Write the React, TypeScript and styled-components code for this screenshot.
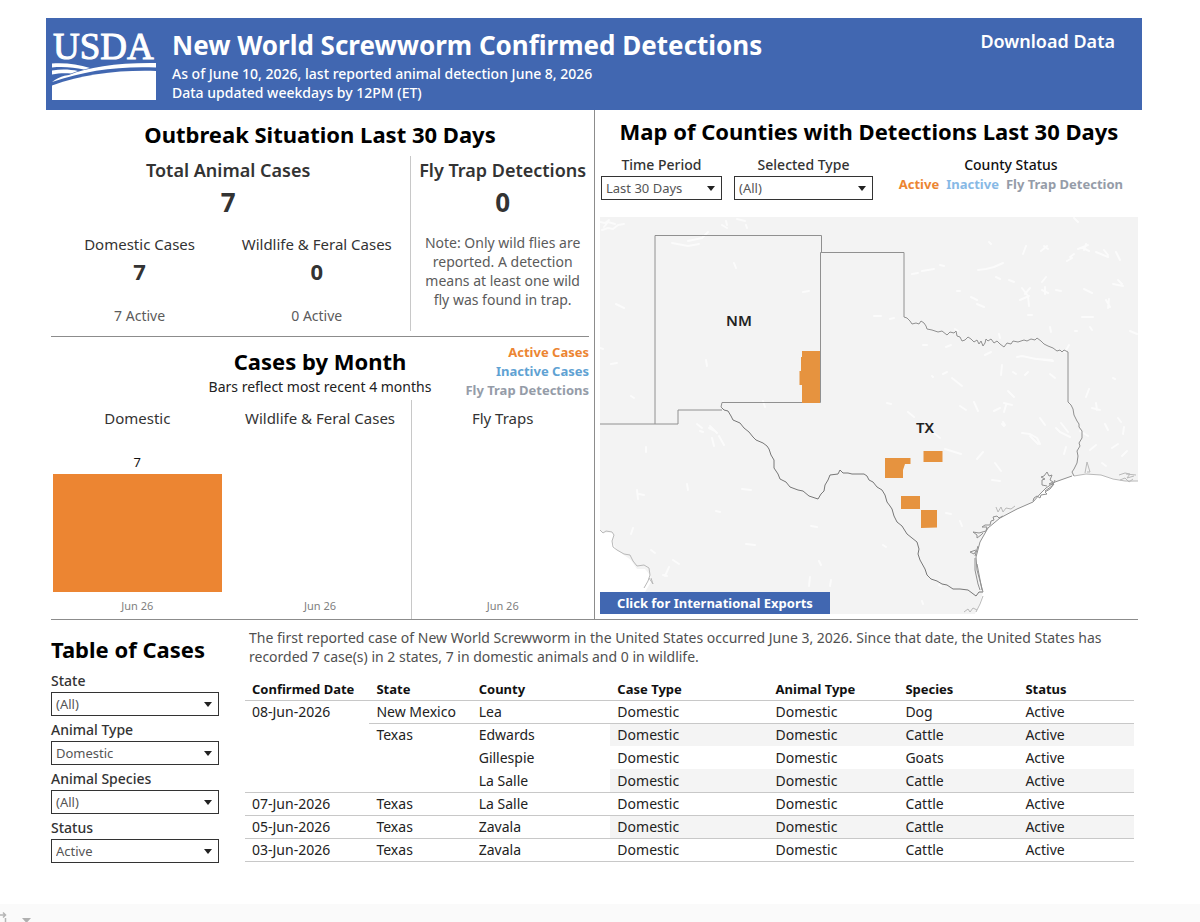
import React from "react";
import styled, { createGlobalStyle } from "styled-components";

const colors = {
  blue: "#4167b1",
  orange: "#ec8532",
  county: "#e6933f",
  inactive: "#5fa2d3",
  inactiveLight: "#87b9e6",
  trap: "#959ca8",
  text: "#333333",
  muted: "#5b5b5b",
  rule: "#8c8c8c",
  lightRule: "#c8c8c8",
  land: "#f3f3f3",
};

const GlobalStyle = createGlobalStyle`
  * { box-sizing: border-box; }
  body {
    margin: 0;
    background: #ffffff;
    color: ${colors.text};
    font-family: "Noto Sans", "Open Sans", sans-serif;
    font-size: 14px;
    line-height: 18px;
  }
  h1, h2, h3, p, dl, dd, dt, ul { margin: 0; padding: 0; }
`;

const Page = styled.div`
  min-height: 100vh;
  display: flex;
  flex-direction: column;
`;

const Dashboard = styled.main`
  flex: 1;
  padding: 18px 58px 38px 46px;
`;

const Banner = styled.header`
  display: flex;
  align-items: flex-start;
  gap: 16px;
  min-height: 92px;
  padding: 9px 27px 0 6px;
  background: ${colors.blue};
  color: #ffffff;
`;

const Logo = styled.svg`
  width: 104px;
  height: 74px;
  flex: none;
  overflow: visible;
`;

const BannerText = styled.div`
  flex: 1;
  font-size: 14px;
  font-weight: 500;
  line-height: 19px;
`;

const BannerTitle = styled.h1`
  font-size: 26px;
  font-weight: 700;
  line-height: 37px;
`;

const DownloadLink = styled.a`
  padding-top: 3px;
  color: #ffffff;
  font-size: 18px;
  font-weight: 600;
  line-height: 22px;
  text-decoration: none;
`;

const Overview = styled.div`
  display: grid;
  grid-template-columns: 1fr 1fr;
`;

const LeftColumn = styled.div`
  display: flex;
  flex-direction: column;
`;

const MapColumn = styled.section`
  border-left: 1px solid ${colors.rule};
  padding: 6px 4px 5px 5px;
`;

const SectionTitle = styled.h2`
  color: #000000;
  font-size: 22px;
  font-weight: 700;
  line-height: 30px;
  text-align: center;
`;

const Rule = styled.hr<{ $right?: number }>`
  height: 1px;
  margin: 0 ${(p) => p.$right ?? 5}px 0 5px;
  border: 0;
  background: ${colors.rule};
`;

const Situation = styled.section`
  padding: 9px 0 5px;
`;

const SituationGrid = styled.div`
  display: grid;
  grid-template-columns: 2fr 1fr;
  margin-top: 7px;
`;

const Totals = styled.div`
  min-height: 175px;
  padding-top: 3px;
  border-right: 1px solid ${colors.lightRule};
  text-align: center;
`;

const FlyTrap = styled.div`
  padding-top: 3px;
  text-align: center;
`;

const MetricTitle = styled.h3`
  font-size: 18px;
  font-weight: 600;
  line-height: 22px;
`;

const MetricValue = styled.p`
  font-size: 26px;
  font-weight: 700;
  line-height: 42px;
`;

const SubMetrics = styled.div`
  display: grid;
  grid-template-columns: 1fr 1fr;
  padding: 12px 5px 0;
`;

const SubMetricTitle = styled.h3`
  font-size: 15px;
  font-weight: 400;
  line-height: 18px;
`;

const SubMetricValue = styled.p`
  font-size: 22px;
  font-weight: 700;
  line-height: 36px;
`;

const SubMetricNote = styled.p`
  padding-top: 18px;
  color: ${colors.muted};
  line-height: 18px;
`;

const TrapNote = styled.p`
  width: 164px;
  margin: 10px auto 0;
  color: ${colors.muted};
  line-height: 19px;
`;

const MonthSection = styled.section`
  flex: 1;
  display: flex;
  flex-direction: column;
`;

const MonthHead = styled.div`
  display: grid;
  grid-template-columns: 1fr auto 1fr;
  padding: 6px 5px 0;
`;

const MonthTitle = styled.div`
  grid-column: 2;
  padding-top: 3px;
  color: #222222;
  text-align: center;
`;

const MonthSubtitle = styled.p`
  margin-top: 2px;
`;

const MonthLegend = styled.ul`
  display: flex;
  flex-direction: column;
  align-items: flex-end;
  list-style: none;
`;

const LegendItem = styled.li<{ $color: string }>`
  color: ${(p) => p.$color};
  font-size: 13px;
  font-weight: 700;
  line-height: 19px;
  white-space: nowrap;
`;

const Charts = styled.div`
  flex: 1;
  display: grid;
  grid-template-columns: repeat(3, 1fr);
`;

const Chart = styled.figure<{ $divided?: boolean }>`
  display: flex;
  flex-direction: column;
  margin: 0;
  padding: 9px 7px 4px 6px;
  border-left: 1px solid ${(p) => (p.$divided ? colors.lightRule : "transparent")};
  text-align: center;
`;

const ChartTitle = styled.figcaption`
  font-size: 15px;
  line-height: 18px;
`;

const Plot = styled.div`
  flex: 1;
  display: flex;
  flex-direction: column;
  justify-content: flex-end;
  color: #111111;
  font-size: 13px;
`;

const Bar = styled.div`
  height: 118px;
  margin-top: 3px;
  background: ${colors.orange};
`;

const AxisLabel = styled.p`
  padding-top: 5px;
  color: #808080;
  font-size: 11px;
  line-height: 18px;
`;

const MapControls = styled.div`
  display: flex;
  gap: 12px;
  padding: 10px 15px 17px 1px;
`;

const Field = styled.div<{ $width?: number; $center?: boolean }>`
  width: ${(p) => (p.$width ? `${p.$width}px` : "auto")};
  text-align: ${(p) => (p.$center ? "center" : "left")};
`;

const FieldLabel = styled.label`
  display: block;
  font-weight: 500;
  line-height: 18px;
`;

const SelectFrame = styled.div`
  position: relative;
  margin-top: 2px;

  &::after {
    content: "";
    position: absolute;
    top: 10px;
    right: 7px;
    border: 4px solid transparent;
    border-top: 5px solid #222222;
    border-bottom: 0;
    pointer-events: none;
  }
`;

const Select = styled.select`
  appearance: none;
  display: block;
  width: 100%;
  height: 24px;
  padding: 0 20px 0 4px;
  border: 1px solid #333333;
  border-radius: 0;
  background: #ffffff;
  color: #555555;
  font-family: inherit;
  font-size: 13px;
  line-height: 20px;
`;

const StatusLegend = styled.div`
  margin-left: auto;
  color: #111111;
  font-weight: 500;
  text-align: center;
`;

const StatusList = styled.ul`
  display: flex;
  justify-content: flex-end;
  gap: 7px;
  padding-top: 1px;
  list-style: none;
`;

const MapFrame = styled.div`
  position: relative;
`;

const MapDrawing = styled.svg`
  display: block;
  width: 100%;
  height: auto;
`;

const ExportButton = styled.button`
  position: absolute;
  left: 0;
  bottom: 0;
  height: 22px;
  width: 230px;
  padding: 0;
  border: 0;
  background: ${colors.blue};
  color: #ffffff;
  font-family: inherit;
  font-size: 13px;
  font-weight: 700;
  line-height: 22px;
`;

const CasesSection = styled.section`
  display: grid;
  grid-template-columns: 168px 1fr;
  gap: 26px;
  padding: 8px 8px 0 5px;
`;

const Filters = styled.form`
  display: flex;
  flex-direction: column;
  gap: 5px;
  padding-top: 6px;
`;

const FiltersTitle = styled(SectionTitle)`
  margin-bottom: 3px;
  text-align: left;
  white-space: nowrap;
`;

const Summary = styled.p`
  padding: 0 0 0 4px;
  color: #505050;
  line-height: 19px;
`;

const CaseTable = styled.table`
  width: 100%;
  margin-top: 14px;
  border-collapse: collapse;
  table-layout: fixed;
  color: #222222;
`;

const HeadCell = styled.th<{ $share: number }>`
  width: ${(p) => p.$share}%;
  height: 20px;
  padding: 0 0 0 7px;
  border-bottom: 1px solid ${colors.lightRule};
  color: #111111;
  font-size: 13px;
  font-weight: 700;
  line-height: 19px;
  text-align: left;
  white-space: nowrap;
`;

const Cell = styled.td<{ $shaded?: boolean; $line?: boolean }>`
  height: 23px;
  padding: 0 0 0 7px;
  border-bottom: 1px solid ${(p) => (p.$line ? colors.lightRule : "transparent")};
  background: ${(p) => (p.$shaded ? "#f4f4f4" : "transparent")};
  background-clip: padding-box;
  line-height: 22px;
  vertical-align: top;
  white-space: nowrap;
`;

const Toolbar = styled.footer`
  display: flex;
  align-items: flex-end;
  height: 18px;
  background: #fafafa;
`;

type CaseRow = {
  date?: string;
  dateSpan?: number;
  state?: string;
  stateSpan?: number;
  county: string;
  species: string;
  line: boolean;
};

const caseRows: CaseRow[] = [
  { date: "08-Jun-2026", dateSpan: 4, state: "New Mexico", county: "Lea", species: "Dog", line: true },
  { state: "Texas", stateSpan: 3, county: "Edwards", species: "Cattle", line: false },
  { county: "Gillespie", species: "Goats", line: false },
  { county: "La Salle", species: "Cattle", line: true },
  { date: "07-Jun-2026", state: "Texas", county: "La Salle", species: "Cattle", line: true },
  { date: "05-Jun-2026", state: "Texas", county: "Zavala", species: "Cattle", line: true },
  { date: "03-Jun-2026", state: "Texas", county: "Zavala", species: "Cattle", line: true },
];

const columns: [string, number][] = [
  ["Confirmed Date", 14],
  ["State", 11.5],
  ["County", 15.6],
  ["Case Type", 17.8],
  ["Animal Type", 14.6],
  ["Species", 13.5],
  ["Status", 13],
];

function Dropdown(props: { id: string; label: string; options: string[]; width?: number; center?: boolean }) {
  return (
    <Field $width={props.width} $center={props.center}>
      <FieldLabel htmlFor={props.id}>{props.label}</FieldLabel>
      <SelectFrame>
        <Select id={props.id}>
          {props.options.map((o) => (
            <option key={o}>{o}</option>
          ))}
        </Select>
      </SelectFrame>
    </Field>
  );
}

function UsdaLogo() {
  return (
    <Logo viewBox="0 -1 104 74" role="img" aria-label="USDA">
      <text x="1" y="31" fill="#fff" stroke="#fff" strokeWidth="1" fontFamily="'Liberation Serif', serif" fontSize="37">
        USDA
      </text>
      <g fill="#fff">
        <path d="M0 35.500 C14 34.500 26 36.500 38 40 L32 41.500 C22 39.500 12 38.500 0 39.500 Z" />
        <path d="M0 42.500 C10 41 18 41.500 26 43 L19 45.500 C13 45 7 45 0 46.500 Z" />
        <path d="M0 54 C6 50 10 48 14 47.500 L17 47 C36 39 66 34.500 104 35 V39.500 C66 38 34 42.500 0 54 Z" />
        <path d="M0 57.500 C32 46 66 42 104 43 V72 H0 Z" />
      </g>
    </Logo>
  );
}

const lakes =
  "M600 222l5 1 4-3M602 230l6-2 5 1 5-4 6-1M604 227l4-5 7 2M672 243l16 3 11-2M688 241l14-3 6-6M722 225l5 3M726 221l1 4M737 219l8 2M746 225l1 3M734 263l2 5M803 292l6-1M616 304l8 4M706 360l1 6M611 364l6-1M600 348l3 1M631 396l3 2M763 401l2 6M697 424l5 4M700 431l3 1M710 426l7 7M715 431l-6-3M712 438l2 8M719 436l5 9M646 447l0 5M637 490l1 9M639 494l5 1M687 484l1 6M742 489l9 1M716 511l4 1M633 528l-2 6M811 526l6 1M746 544l9 1M651 550l4 3M673 560l6 4M669 567l-4 9M663 575l4 1M819 561l2 4M810 577l-1 9M831 580l-1 6M912 274l6-1M922 271l12-2M940 265l4 1M978 270l8-1 8-2 9-4M989 242l2 2M1026 246l-3 8M1047 246l-6 5M1044 246l4 3M1067 261l5-3M1070 257l4-3M1078 249l10-4M1083 248l6 3M1086 244l-2 6M1096 252l12 5M1104 250l4 5M1116 252l4 8M1074 218l4 4M1113 284l10 2M1118 280l4 4M1084 289l8 4M1106 300l4 7M1109 299l-1 9M1082 317l11 0M1022 288l6 8 1 10M1020 300l9-4M1030 288l-5 6M1042 290l6 3M1045 287l0 7M1042 282l4-5M1056 290l5 1M971 297l6 3M977 304l7 3M1009 280l5 2M996 277l4 2M957 291l3 0M1028 315l4 0M1050 327l1 5M1075 331l2 0M1090 327l2 3M1069 345l-4 7M1130 331l7 3M874 316l7 0M890 319l4-1M923 345l4 0M955 329l3 2M946 347l5-2M985 355l6-3M999 334l1 4M1002 365l-1 10M1013 372l3 2M1025 375l3-3M1017 357l5-1M1022 356l14 3 16 1M1037 359l16 2M1050 374l5 4M1089 389l-3 8M1113 378l2 1M943 374l4-2M932 376l1 1M952 378l10 8M1008 391l6 6M1004 403l8 2M1006 405l-2 7M974 402l4 9M960 406l6 4M887 403l4 1M908 412l6 5M1003 422l2 3M1096 403l1 7M1092 408l8 2M1040 418l5 7M1056 428l4 4 10 5M1061 423l7 9M1105 424l3 6M1118 418l3 4M1124 427l-1 7M1022 433l8 1 7 4 3 6M1030 436l8 8M1066 447l-2 7M983 452l-6 7M1102 463l4 3M945 449l16 5M930 430l10 8M995 463l6 8M992 480l8 1M946 513l5 1M960 521l2 5M932 454l0 7M1002 424l2 2M1080 431l8 5M1090 450l6-5M1112 448l6-4M1122 456l5-5M883 545l3 2M922 601l1 3M939 585l2 1M1000 408l-6 3";

const redRiver =
  "M904 252.500V317L907 318 910 321 912 324 916 323 919 324 921 321 924 323 926 326 927 329 932 330 938 332 942 331 947 335 950 332 954 333 956 331 957 336 960 337 962 341 965 340 968 337 971 339 974 342 977 340 979 344 981 341 983 346 985 343 986 339 988 341 991 339 994 343 997 341 1000 344 1004 347 1007 343 1011 344 1013 341 1018 342 1024 340 1027 341 1031 339 1035 340 1037 338 1041 341 1044 344 1048 346 1053 348 1057 351 1060 350 1062 352 1064 350 1068 352V402L1071 405 1073 409 1074 415 1077 421 1079 424 1079 427 1082 431 1082 438 1079 443 1080 446 1077 451 1078 456 1077 463 1074 469 1072 472 1074 476";

const rioGrande =
  "M722 408L724 410 728 411 731 416 733 420 740 423 744 428 749 432 753 437 756 440 763 443 767 446 769 449 771 455 774 460 774 468 778 474 780 479 786 482 790 487 798 490 803 491 809 496 812 497 818 499 821 494 824 491 825 485 828 480 830 475 838 474 840 470 843 473 848 473 852 474 864 474 867 476 869 480 873 482 877 487 882 490 885 495 887 502 890 506 892 509 894 516 897 522 902 526 907 534 912 538 917 542 919 549 918 554 920 560 925 569 927 575 931 579 937 581 942 584 947 585 953 589 960 589 968 590 972 593 976 596 979 592 983 592";

function StateMap() {
  return (
    <MapDrawing viewBox="600 217 538 397" role="img" aria-label="Counties with detections in New Mexico and Texas">
      <rect x="600" y="217" width="538" height="397" fill={colors.land} />
      <path d="M1138 481 L1130 482 1120 480 1112 478 1100 475 1087 474 1072 476 1055 482 1046 488 1040 494 1033 502 1017 509 1000 518 988 528 980 542 976 557 977 570 980 581 983 592 980 602 975 614 H1138 Z" fill="#fff" />
      <path d="M600 530 L603 533 612 532 614 535 612 541 616 549 624 555 631 560 637 569 645 569 650 575 651 582 645 592 645 614 H600 Z" fill="#fff" />
      <path d={lakes} fill="none" stroke="#fff" strokeWidth="2" strokeLinecap="round" strokeLinejoin="round" opacity="0.65" />

      <g fill="none" stroke="#b9b9b9" strokeWidth="1">
        <path d="M600 530l3 3 3-2 6 1 2 3-2 6 1 6 4 3 7 4 6 1 3 6 4 5 7-1 5 3 1 7-2 6-4 7M649 578l4 6-2-6" />
        <path d="M1074 476l12-2 15 1 12 4 12 2 9 0 4 0M1085 473l2-11 3 10-3 0M1119 475l6-2 5 1-3 4 7-2M1120 480l5-2 4 4 4-3M1126 474l10 1" />
        <path d="M996 507l2 5 3-5 2 5 3-4 5 1 4-3M983 596l-3 8-4 8M964 612l4-3 2 3 3-4 4 2" />
      </g>

      <g fill="none" stroke="#909090" strokeWidth="1" strokeLinejoin="round">
        <path d="M600 424H678V410H722M655 424V235.500H821.500V252.500M904 252.500H820.500V402.500H722L721 407 724 410" />
        <path d={redRiver} />
        <path stroke="#777" d={rioGrande} />
        <path d="M1072 476L1055 482 1046 488 1040 494 1033 502 1017 509 1000 518 988 528 980 542 976 557 977 570 983 592M975 558l0 12 3 14 2 6M978 546l-3 10M982 590l-5-26" />
        <path d="M1047 486l-5-1 0-5 3-1-4-2 3-1 3-4 2 4 3-1-2 5 3 2-4 2 5 0-4 5-5 3 2 2-6 1-1 3-3-2-3 2-1 3M1055 480l-3 6-7 5M1003 516l-4 2-2-2-4 1 1 3-3 1-1 4-5 0-3 2 5 0-1 4-7 2-6-1 4 3 0 3 4-3 2-2M976 550l-6 2 4 2 2-3" />
      </g>

      <g fill={colors.county}>
        <path d="M802 351H820V403H802V385H799.500V371H801V357H802Z" />
        <path d="M885 458H910.500V464H905L903 470V478H885Z" />
        <path d="M923.500 451H942.500V462H923.500Z" />
        <path d="M901 496H920V509H901Z" />
        <path d="M921 510H937V527.500L921 528Z" />
      </g>
      <g fill="#222" fontSize="15" fontWeight="600" textAnchor="middle">
        <text x="739" y="326">NM</text>
        <text x="925" y="433">TX</text>
      </g>
    </MapDrawing>
  );
}

export default function App() {
  return (
    <Page>
      <GlobalStyle />
      <Dashboard>
        <Banner>
          <UsdaLogo />
          <BannerText>
            <BannerTitle>New World Screwworm Confirmed Detections</BannerTitle>
            <p>As of June 10, 2026, last reported animal detection June 8, 2026</p>
            <p>Data updated weekdays by 12PM (ET)</p>
          </BannerText>
          <DownloadLink href="#download">Download Data</DownloadLink>
        </Banner>

        <Overview>
          <LeftColumn>
            <Situation>
              <SectionTitle>Outbreak Situation Last 30 Days</SectionTitle>
              <SituationGrid>
                <Totals>
                  <MetricTitle>Total Animal Cases</MetricTitle>
                  <MetricValue>7</MetricValue>
                  <SubMetrics>
                    <div>
                      <SubMetricTitle>Domestic Cases</SubMetricTitle>
                      <SubMetricValue>7</SubMetricValue>
                      <SubMetricNote>7 Active</SubMetricNote>
                    </div>
                    <div>
                      <SubMetricTitle>Wildlife &amp; Feral Cases</SubMetricTitle>
                      <SubMetricValue>0</SubMetricValue>
                      <SubMetricNote>0 Active</SubMetricNote>
                    </div>
                  </SubMetrics>
                </Totals>
                <FlyTrap>
                  <MetricTitle>Fly Trap Detections</MetricTitle>
                  <MetricValue>0</MetricValue>
                  <TrapNote>
                    Note: Only wild flies are reported. A detection means at least one wild fly was found in trap.
                  </TrapNote>
                </FlyTrap>
              </SituationGrid>
            </Situation>
            <Rule />
            <MonthSection>
              <MonthHead>
                <MonthTitle>
                  <SectionTitle>Cases by Month</SectionTitle>
                  <MonthSubtitle>Bars reflect most recent 4 months</MonthSubtitle>
                </MonthTitle>
                <MonthLegend>
                  <LegendItem $color={colors.orange}>Active Cases</LegendItem>
                  <LegendItem $color={colors.inactive}>Inactive Cases</LegendItem>
                  <LegendItem $color={colors.trap}>Fly Trap Detections</LegendItem>
                </MonthLegend>
              </MonthHead>
              <Charts>
                <Chart>
                  <ChartTitle>Domestic</ChartTitle>
                  <Plot>
                    7<Bar />
                  </Plot>
                  <AxisLabel>Jun 26</AxisLabel>
                </Chart>
                <Chart>
                  <ChartTitle>Wildlife &amp; Feral Cases</ChartTitle>
                  <Plot />
                  <AxisLabel>Jun 26</AxisLabel>
                </Chart>
                <Chart $divided>
                  <ChartTitle>Fly Traps</ChartTitle>
                  <Plot />
                  <AxisLabel>Jun 26</AxisLabel>
                </Chart>
              </Charts>
            </MonthSection>
          </LeftColumn>

          <MapColumn>
            <SectionTitle>Map of Counties with Detections Last 30 Days</SectionTitle>
            <MapControls>
              <Dropdown id="period" label="Time Period" options={["Last 30 Days", "All"]} width={121} center />
              <Dropdown id="type" label="Selected Type" options={["(All)", "Domestic", "Wildlife"]} width={139} center />
              <StatusLegend>
                County Status
                <StatusList>
                  <LegendItem $color={colors.orange}>Active</LegendItem>
                  <LegendItem $color={colors.inactiveLight}>Inactive</LegendItem>
                  <LegendItem $color={colors.trap}>Fly Trap Detection</LegendItem>
                </StatusList>
              </StatusLegend>
            </MapControls>
            <MapFrame>
              <StateMap />
              <ExportButton type="button">Click for International Exports</ExportButton>
            </MapFrame>
          </MapColumn>
        </Overview>
        <Rule $right={4} />

        <CasesSection>
          <Filters>
            <FiltersTitle>Table of Cases</FiltersTitle>
            <Dropdown id="state" label="State" options={["(All)", "New Mexico", "Texas"]} />
            <Dropdown id="animal-type" label="Animal Type" options={["Domestic", "Wildlife"]} />
            <Dropdown id="species" label="Animal Species" options={["(All)", "Cattle", "Dog", "Goats"]} />
            <Dropdown id="status" label="Status" options={["Active", "Inactive"]} />
          </Filters>
          <div>
            <Summary>
              The first reported case of New World Screwworm in the United States occurred June 3, 2026. Since that
              date, the United States has recorded 7 case(s) in 2 states, 7 in domestic animals and 0 in wildlife.
            </Summary>
            <CaseTable>
              <thead>
                <tr>
                  {columns.map(([name, share]) => (
                    <HeadCell key={name} scope="col" $share={share}>
                      {name}
                    </HeadCell>
                  ))}
                </tr>
              </thead>
              <tbody>
                {caseRows.map((row, i) => (
                  <tr key={i}>
                    {row.date && (
                      <Cell rowSpan={row.dateSpan} $line>
                        {row.date}
                      </Cell>
                    )}
                    {row.state && (
                      <Cell rowSpan={row.stateSpan} $line>
                        {row.state}
                      </Cell>
                    )}
                    <Cell $line={row.line}>{row.county}</Cell>
                    {["Domestic", "Domestic", row.species, "Active"].map((value, j) => (
                      <Cell key={j} $line={row.line} $shaded={i % 2 === 1}>
                        {value}
                      </Cell>
                    ))}
                  </tr>
                ))}
              </tbody>
            </CaseTable>
          </div>
        </CasesSection>
      </Dashboard>
      <Toolbar>
        <svg width="40" height="12" viewBox="0 0 40 12" aria-hidden="true">
          <path d="M0 5h5M3 2.500l2.500 2.500L3 7.500M5.500 8v4" fill="none" stroke="#b5b5b5" strokeWidth="1.500" />
          <path d="M22 8h9l-4.500 5z" fill="#b0b0b0" />
        </svg>
      </Toolbar>
    </Page>
  );
}
